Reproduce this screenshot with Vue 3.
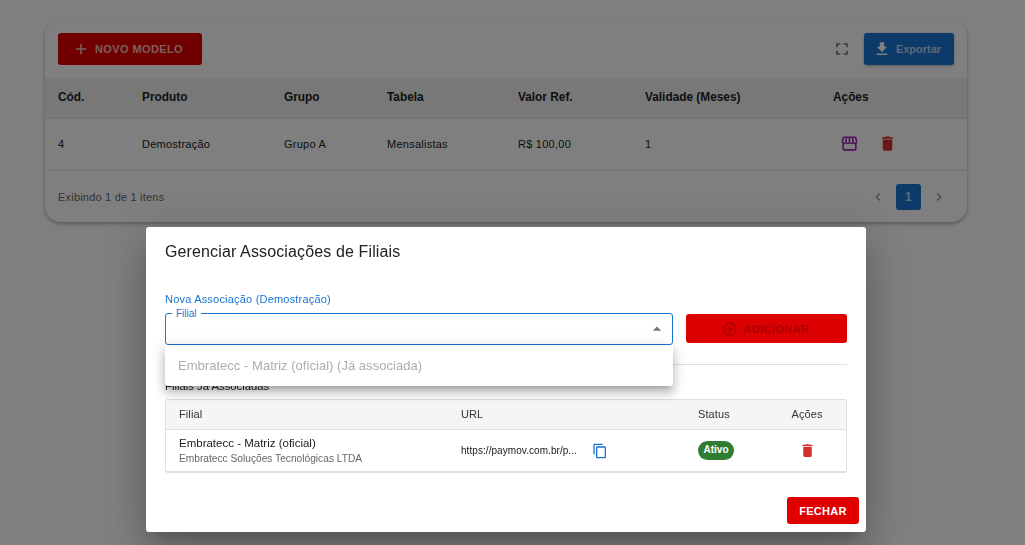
<template>
  <div class="page">
    <div class="card">
      <div class="toolbar">
        <button class="btn-new">
          <svg class="icon-18" viewBox="0 0 24 24"><path d="M19 13h-6v6h-2v-6H5v-2h6V5h2v6h6v2z" /></svg>
          NOVO MODELO
        </button>
        <div class="toolbar-right">
          <svg class="icon-fullscreen" viewBox="0 0 24 24"><path d="M7 14H5v5h5v-2H7v-3zm-2-4h2V7h3V5H5v5zm12 7h-3v2h5v-5h-2v3zM14 5v2h3v3h2V5h-5z" /></svg>
          <button class="btn-export">
            <svg class="icon-18" viewBox="0 0 24 24"><path d="M5 20h14v-2H5v2zM19 9h-4V3H9v6H5l7 7 7-7z" /></svg>
            Exportar
          </button>
        </div>
      </div>

      <table class="model-table">
        <colgroup>
          <col v-for="w in columnWidths" :key="w" :style="{ width: w + 'px' }" />
        </colgroup>
        <thead>
          <tr>
            <th v-for="col in columns" :key="col">{{ col }}</th>
          </tr>
        </thead>
        <tbody>
          <tr>
            <td>4</td>
            <td>Demostração</td>
            <td>Grupo A</td>
            <td>Mensalistas</td>
            <td>R$ 100,00</td>
            <td>1</td>
            <td>
              <div class="row-actions">
                <svg class="icon-store" viewBox="0 0 24 24"><path d="M21.9 8.89l-1.05-4.37c-.22-.9-1-1.52-1.91-1.52H5.05c-.9 0-1.69.63-1.9 1.52L2.1 8.89c-.24 1.02-.02 2.06.62 2.88.08.11.19.19.28.29V19c0 1.1.9 2 2 2h14c1.1 0 2-.9 2-2v-6.94c.09-.09.2-.18.28-.28.64-.82.87-1.87.62-2.89zm-2.99-3.9l1.05 4.37c.1.42.01.84-.25 1.17-.14.18-.44.47-.94.47-.61 0-1.14-.49-1.21-1.14L16.98 5l1.93-.01zM13 5h1.96l.54 4.52c.05.39-.07.78-.33 1.07-.22.26-.54.41-.95.41-.67 0-1.22-.59-1.22-1.31V5zM8.49 9.52L9.04 5H11v4.69c0 .72-.55 1.31-1.29 1.31-.34 0-.65-.15-.89-.41-.25-.29-.37-.68-.33-1.07zm-4.45-.16L5.05 5h1.97l-.58 4.86c-.08.65-.6 1.14-1.21 1.14-.49 0-.8-.29-.93-.47-.27-.32-.36-.75-.26-1.17zM5 19v-6.03c.08.01.15.03.23.03.87 0 1.66-.36 2.24-.95.6.6 1.4.95 2.31.95.87 0 1.65-.36 2.23-.93.59.57 1.39.93 2.29.93.84 0 1.64-.35 2.24-.95.58.59 1.37.95 2.24.95.08 0 .15-.02.23-.03V19H5z" /></svg>
                <svg class="icon-trash" viewBox="0 0 24 24"><path d="M6 19c0 1.1.9 2 2 2h8c1.1 0 2-.9 2-2V7H6v12zM19 4h-3.5l-1-1h-5l-1 1H5v2h14V4z" /></svg>
              </div>
            </td>
          </tr>
        </tbody>
      </table>

      <div class="card-footer">
        <span>Exibindo 1 de 1 itens</span>
        <div class="pager">
          <svg class="chev" viewBox="0 0 24 24"><path d="M15.41 7.41 14 6l-6 6 6 6 1.41-1.41L10.83 12z" /></svg>
          <span class="page-current">1</span>
          <svg class="chev" viewBox="0 0 24 24"><path d="M10 6 8.59 7.41 13.17 12l-4.58 4.58L10 18l6-6z" /></svg>
        </div>
      </div>
    </div>

    <div class="backdrop">
      <div class="dialog">
        <h2 class="dialog-title">Gerenciar Associações de Filiais</h2>
        <div class="dialog-body">
          <div class="section-label">Nova Associação (Demostração)</div>
          <div class="form-row">
            <div class="select">
              <span class="select-legend">Filial</span>
              <svg class="select-arrow" viewBox="0 0 24 24"><path d="M7 14l5-5 5 5z" /></svg>
              <div class="dropdown">
                <div class="dropdown-item">Embratecc - Matriz (oficial) (Já associada)</div>
              </div>
            </div>
            <button class="btn-add">
              <svg class="icon-add" viewBox="0 0 24 24"><path d="M13 7h-2v4H7v2h4v4h2v-4h4v-2h-4V7zm-1-5C6.48 2 2 6.48 2 12s4.48 10 10 10 10-4.48 10-10S17.52 2 12 2zm0 18c-4.41 0-8-3.59-8-8s3.59-8 8-8 8 3.59 8 8-3.59 8-8 8z" /></svg>
              ADICIONAR
            </button>
          </div>
          <hr class="divider" />
          <div class="section-title">Filiais Já Associadas</div>
          <div class="assoc-box">
            <div class="assoc-row assoc-head">
              <span>Filial</span>
              <span>URL</span>
              <span>Status</span>
              <span class="center">Ações</span>
            </div>
            <div class="assoc-row assoc-item">
              <div>
                <div class="branch-name">Embratecc - Matriz (oficial)</div>
                <div class="branch-company">Embratecc Soluções Tecnológicas LTDA</div>
              </div>
              <div class="url-cell">
                <span class="url-text">https://paymov.com.br/p...</span>
                <svg class="icon-copy" viewBox="0 0 24 24"><path d="M16 1H4c-1.1 0-2 .9-2 2v14h2V3h12V1zm3 4H8c-1.1 0-2 .9-2 2v14c0 1.1.9 2 2 2h11c1.1 0 2-.9 2-2V7c0-1.1-.9-2-2-2zm0 16H8V7h11v14z" /></svg>
              </div>
              <div class="chip-cell"><span class="chip">Ativo</span></div>
              <div class="trash-cell">
                <svg class="icon-trash-small" viewBox="0 0 24 24"><path d="M6 19c0 1.1.9 2 2 2h8c1.1 0 2-.9 2-2V7H6v12zM19 4h-3.5l-1-1h-5l-1 1H5v2h14V4z" /></svg>
              </div>
            </div>
          </div>
        </div>
        <div class="dialog-actions">
          <button class="btn-close">FECHAR</button>
        </div>
      </div>
    </div>
  </div>
</template>

<script setup>
const columns = ['Cód.', 'Produto', 'Grupo', 'Tabela', 'Valor Ref.', 'Validade (Meses)', 'Ações'];
const columnWidths = [84, 142, 103, 131, 127, 188, 147];
</script>

<style scoped>
.page {
  height: 545px;
  padding: 20px 58px 0 45px;
  box-sizing: border-box;
  background: #fff;
  font-family: "Liberation Sans", Arial, sans-serif;
  color: #212121;
  overflow: hidden;
}
.card {
  width: 922px;
  height: 202px;
  background: #fff;
  border-radius: 16px;
  box-shadow: 0 2px 4px rgba(0, 0, 0, 0.3);
  overflow: hidden;
}
.toolbar {
  height: 58px;
  padding: 0 13px;
  display: flex;
  align-items: center;
  justify-content: space-between;
  box-sizing: border-box;
}
button {
  border: 0;
  font-family: inherit;
  display: flex;
  align-items: center;
  justify-content: center;
}
.btn-new {
  width: 144px;
  height: 32px;
  padding: 0 5px 0 0;
  background: #e00000;
  color: rgba(255, 255, 255, 0.75);
  border-radius: 3px;
  font-size: 11px;
  font-weight: 700;
  letter-spacing: 0.4px;
  gap: 5px;
}
.btn-new svg {
  fill: #fff;
  opacity: 0.75;
}
.icon-18 {
  width: 18px;
  height: 18px;
}
.toolbar-right {
  display: flex;
  align-items: center;
  gap: 12px;
}
.icon-fullscreen {
  width: 20px;
  height: 20px;
  fill: #777;
}
.btn-export {
  width: 90px;
  height: 32px;
  padding: 0 4px 0 0;
  background: #1976d2;
  color: rgba(255, 255, 255, 0.7);
  border-radius: 3px;
  font-size: 11px;
  font-weight: 700;
  gap: 5px;
  box-shadow: 0 1px 3px rgba(0, 0, 0, 0.3);
}
.btn-export svg {
  fill: #fff;
}
.model-table {
  width: 922px;
  border-collapse: collapse;
  table-layout: fixed;
}
.model-table th {
  height: 40px;
  padding: 0 0 3px 13px;
  background: #f0f1f3;
  border-bottom: 1px solid #e4e4e4;
  border-top: 1px solid #eee;
  text-align: left;
  font-size: 11.85px;
  font-weight: 700;
  box-sizing: border-box;
}
.model-table td {
  height: 52px;
  padding: 0 0 2px 13px;
  border-bottom: 1px solid #e4e4e4;
  font-size: 11px;
  letter-spacing: 0.25px;
  box-sizing: border-box;
}
.row-actions {
  display: flex;
  align-items: center;
  gap: 19px;
  padding-left: 7px;
}
.icon-store {
  width: 19px;
  height: 19px;
  fill: #9c27b0;
}
.icon-trash {
  width: 19px;
  height: 19px;
  fill: #d32f2f;
}
.card-footer {
  height: 52px;
  padding: 0 20px 0 13px;
  display: flex;
  align-items: center;
  justify-content: space-between;
  font-size: 11px;
  letter-spacing: 0.2px;
  color: #666;
}
.pager {
  display: flex;
  align-items: center;
  gap: 10px;
}
.chev {
  width: 16px;
  height: 16px;
  fill: #999;
}
.page-current {
  width: 25px;
  height: 26px;
  background: #1976d2;
  color: rgba(255, 255, 255, 0.7);
  border-radius: 3px;
  display: flex;
  align-items: center;
  justify-content: center;
  font-size: 12px;
  font-weight: 700;
}
.backdrop {
  position: fixed;
  inset: 0;
  background: rgba(0, 0, 0, 0.5);
  display: flex;
  justify-content: center;
  padding: 227px 159px 0 146px;
  box-sizing: border-box;
}
.dialog {
  width: 720px;
  height: 305px;
  background: #fff;
  border-radius: 3px;
  box-shadow: 0 11px 15px -7px rgba(0, 0, 0, 0.2), 0 24px 38px 3px rgba(0, 0, 0, 0.14), 0 9px 46px 8px rgba(0, 0, 0, 0.12);
  display: flex;
  flex-direction: column;
}
.dialog-title {
  margin: 0;
  padding: 15px 19px 0;
  font-size: 16px;
  line-height: 20px;
  font-weight: 400;
  letter-spacing: 0.13px;
}
.dialog-body {
  padding: 0 19px;
  flex: 1;
}
.section-label {
  margin-top: 30px;
  font-size: 11px;
  line-height: 14px;
  color: #1976d2;
  letter-spacing: 0.2px;
}
.form-row {
  margin-top: 7px;
  display: flex;
  align-items: flex-start;
  gap: 13px;
}
.select {
  position: relative;
  width: 508px;
  height: 32px;
  border: 1px solid #1976d2;
  border-radius: 3px;
  box-sizing: border-box;
}
.select-legend {
  position: absolute;
  left: 6px;
  top: -6px;
  padding: 0 4px;
  background: #fff;
  color: #1976d2;
  font-size: 10px;
  line-height: 11px;
}
.select-arrow {
  position: absolute;
  right: 5px;
  top: 5px;
  width: 20px;
  height: 20px;
  fill: #757575;
}
.dropdown {
  position: absolute;
  left: -1px;
  top: 31px;
  width: 508px;
  height: 41px;
  background: #fff;
  border-radius: 0 0 3px 3px;
  box-shadow: 0 5px 5px -3px rgba(0, 0, 0, 0.2), 0 8px 10px 1px rgba(0, 0, 0, 0.14), 0 3px 14px 2px rgba(0, 0, 0, 0.12);
  z-index: 2;
  display: flex;
  align-items: center;
}
.dropdown-item {
  padding-left: 13px;
  font-size: 13px;
  letter-spacing: 0.03px;
  color: #adadad;
}
.btn-add {
  width: 161px;
  height: 29px;
  margin-top: 1px;
  padding: 0 2px 0 0;
  background: #dd0000;
  color: #a80000;
  border-radius: 3px;
  font-size: 11px;
  font-weight: 700;
  letter-spacing: 0.4px;
  gap: 6px;
}
.icon-add {
  width: 16px;
  height: 16px;
  fill: #a80000;
}
.divider {
  margin: 19px 0 0;
  border: 0;
  border-top: 1px solid #e0e0e0;
}
.section-title {
  margin-top: 14px;
  font-size: 11.3px;
  line-height: 14px;
}
.assoc-box {
  width: 682px;
  margin-top: 6px;
  border: 1px solid #e0e0e0;
  border-bottom-width: 2px;
  border-radius: 3px;
  box-sizing: border-box;
}
.assoc-row {
  display: grid;
  grid-template-columns: 282px 237px 70px 1fr;
  align-items: center;
  padding-left: 13px;
}
.assoc-head {
  height: 30px;
  padding-bottom: 2px;
  background: #f5f5f5;
  border-bottom: 1px solid #e0e0e0;
  font-size: 11px;
  letter-spacing: 0.1px;
  color: #333;
  box-sizing: border-box;
}
.assoc-item {
  height: 41px;
}
.center {
  text-align: center;
}
.branch-name {
  font-size: 11.5px;
  line-height: 15px;
}
.branch-company {
  margin-top: 1px;
  font-size: 10.2px;
  line-height: 14px;
  color: #666;
}
.url-cell {
  display: flex;
  align-items: center;
  gap: 10px;
}
.url-text {
  width: 121px;
  font-size: 10px;
  letter-spacing: 0.06px;
  white-space: nowrap;
}
.icon-copy {
  width: 16px;
  height: 16px;
  fill: #1976d2;
}
.chip-cell {
  margin-top: -1px;
}
.chip {
  display: block;
  width: 36px;
  height: 19px;
  line-height: 18px;
  border-radius: 10px;
  background: #2e7d32;
  color: #fff;
  font-size: 10px;
  font-weight: 700;
  text-align: center;
}
.trash-cell {
  display: flex;
  justify-content: center;
}
.icon-trash-small {
  width: 17px;
  height: 17px;
  fill: #d32f2f;
}
.dialog-actions {
  padding: 0 7px 8px 0;
  display: flex;
  justify-content: flex-end;
}
.btn-close {
  width: 72px;
  height: 27px;
  background: #e00000;
  color: #fff;
  border-radius: 3px;
  font-size: 11px;
  font-weight: 700;
  letter-spacing: 0.3px;
}
</style>
